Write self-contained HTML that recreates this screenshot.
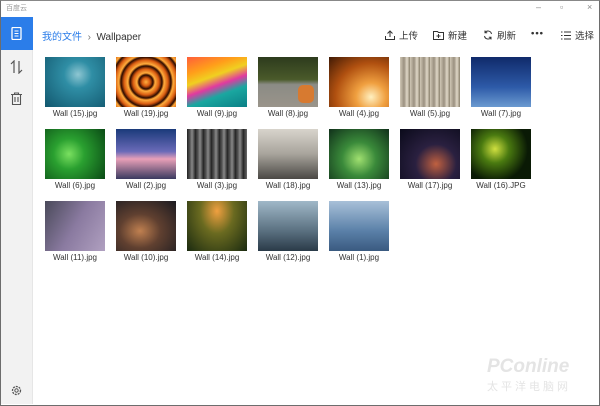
<!DOCTYPE html>
<html><head><meta charset="utf-8"><style>
*{margin:0;padding:0;box-sizing:border-box}
body{width:600px;height:406px;overflow:hidden;background:#fff;font-family:"Liberation Sans","Noto Sans CJK SC",sans-serif;position:relative}
.win{position:absolute;left:0;top:0;width:600px;height:406px;border:1px solid #6d6d6d;border-top:1px solid #888}
.title{position:absolute;left:6px;top:3px;font-size:7px;color:#999}
.side{position:absolute;left:1px;top:17px;width:32px;height:387px;background:#f2f2f2;border-right:1px solid #e6e6e6}
.act{position:absolute;left:1px;top:17px;width:32px;height:33px;background:#2b7de9}
.crumb{position:absolute;left:42px;top:28px;font-size:10px;color:#333}
.crumb b{font-weight:normal;color:#2b7de9}
.tb{position:absolute;top:28px;font-size:9.5px;color:#333;display:flex;align-items:center;gap:4px}
.th{position:absolute;width:60px;height:50px}
.lb{position:absolute;width:72px;text-align:center;font-size:8px;color:#333}
.wm{position:absolute;left:487px;top:356px;color:#e4e4e4;font-size:19px;font-style:italic;font-weight:bold}
.wm2{position:absolute;left:487px;top:378px;color:#e4e4e4;font-size:11px;letter-spacing:3px}
.ctl{position:absolute;top:2px;font-size:9px;color:#888}
</style></head><body>
<div class="win"></div>
<div class="title">百度云</div>
<div class="ctl" style="left:536px">–</div>
<div class="ctl" style="left:560px">▫</div>
<div class="ctl" style="left:587px">×</div>
<div class="side"></div>
<div class="act"></div>
<svg style="position:absolute;left:11px;top:27px" width="12" height="13" viewBox="0 0 12 13"><rect x="1" y="0.5" width="9" height="12" rx="1" fill="none" stroke="#fff" stroke-width="1.3"/><path d="M3.5 4h4M3.5 6.5h4M3.5 9h4" stroke="#fff" stroke-width="1.1"/></svg>
<svg style="position:absolute;left:10px;top:60px" width="13" height="14" viewBox="0 0 13 14"><path d="M4 13V1L1 4M9 1v12l3-3" fill="none" stroke="#555" stroke-width="1.2"/></svg>
<svg style="position:absolute;left:11px;top:92px" width="11" height="13" viewBox="0 0 11 13"><path d="M0 2.5h11M3.5 2.5V1h4v1.5M1.5 2.5v10h8v-10M4 5v5M7 5v5" fill="none" stroke="#555" stroke-width="1.1"/></svg>
<svg style="position:absolute;left:11px;top:385px" width="11" height="11" viewBox="0 0 11 11"><circle cx="5.5" cy="5.5" r="4" fill="none" stroke="#555" stroke-width="1.3" stroke-dasharray="2 1"/><circle cx="5.5" cy="5.5" r="1.7" fill="none" stroke="#555"/></svg>
<div class="crumb"><b>我的文件</b> &nbsp;<span style="color:#777">›</span>&nbsp; Wallpaper</div>
<div class="tb" style="left:385px"><svg width="10" height="10" viewBox="0 0 10 10"><path d="M5 7V1M2.5 3.5L5 1l2.5 2.5M0.5 6v3.5h9V6" fill="none" stroke="#333" stroke-width="1"/></svg>上传</div>
<div class="tb" style="left:433px"><svg width="11" height="10" viewBox="0 0 11 10"><path d="M.5 1.5h4l1 1h5v7H.5z M5.5 4v4M3.5 6h4" fill="none" stroke="#333" stroke-width="1"/></svg>新建</div>
<div class="tb" style="left:483px"><svg width="10" height="10" viewBox="0 0 10 10"><path d="M8.5 4A3.6 3.6 0 0 0 2 2.5M1.5 6A3.6 3.6 0 0 0 8 7.5M2 .5v2.2h2.2M8 9.5V7.3H5.8" fill="none" stroke="#333" stroke-width="1"/></svg>刷新</div>
<div class="tb" style="left:531px;font-weight:bold;letter-spacing:1px">•••</div>
<div class="tb" style="left:561px"><svg width="10" height="9" viewBox="0 0 10 9"><path d="M0 1h1.5M3 1h7M0 4.5h1.5M3 4.5h7M0 8h1.5M3 8h7" stroke="#333" stroke-width="1"/></svg>选择</div>

<div class="th" style="left:45px;top:57px;background:radial-gradient(ellipse at 55% 35%,#8ec6d2 0,#2f8ea5 30%,#12576e 100%)"></div>
<div class="th" style="left:116px;top:57px;background:repeating-radial-gradient(circle at 50% 50%,#ffb040 0,#d85a10 4px,#2a0a00 7px,#ffa030 9px);"></div>
<div class="th" style="left:187px;top:57px;background:linear-gradient(160deg,#ff5e3a 0,#ff9f1a 25%,#f0d020 40%,#e03aa0 55%,#1aa7a0 70%,#0b7f86 100%)"></div>
<div class="th" style="left:258px;top:57px;background:linear-gradient(180deg,#2d3b1d 0,#4a5a2a 45%,#8b8b85 55%,#9a948a 100%)"><div style="position:absolute;left:40px;top:28px;width:16px;height:18px;background:#d77a30;border-radius:5px"></div></div>
<div class="th" style="left:329px;top:57px;background:radial-gradient(ellipse at 70% 80%,#fff0c0 0,#f0a040 25%,#b05010 60%,#401a05 100%)"></div>
<div class="th" style="left:400px;top:57px;background:repeating-linear-gradient(90deg,#cfc6b4 0,#9a9080 4px,#e0d8c8 7px,#8a806c 10px)"></div>
<div class="th" style="left:471px;top:57px;background:linear-gradient(180deg,#0f2a6a 0,#2d5aa8 60%,#6b9ad0 100%)"></div>

<div class="th" style="left:45px;top:129px;background:radial-gradient(circle at 40% 50%,#7ae060 0,#2aa030 35%,#0a4a15 100%)"></div>
<div class="th" style="left:116px;top:129px;background:linear-gradient(180deg,#1a3a7a 0,#6a6ab8 45%,#e8a0b8 60%,#3a3a60 100%)"></div>
<div class="th" style="left:187px;top:129px;background:repeating-linear-gradient(90deg,#222 0,#555 3px,#888 5px,#333 8px)"></div>
<div class="th" style="left:258px;top:129px;background:linear-gradient(180deg,#d8d4cc 0,#a8a49c 50%,#4a4844 100%)"></div>
<div class="th" style="left:329px;top:129px;background:radial-gradient(ellipse at 50% 60%,#a0e070 0,#3a8a3a 40%,#10301a 100%)"></div>
<div class="th" style="left:400px;top:129px;background:radial-gradient(ellipse at 60% 70%,#c06040 0,#2a2040 40%,#0a0a1a 100%)"></div>
<div class="th" style="left:471px;top:129px;background:radial-gradient(circle at 40% 40%,#d0e040 0,#4a7a10 30%,#0a1a05 70%)"></div>

<div class="th" style="left:45px;top:201px;background:linear-gradient(120deg,#4a4a5a 0,#8a7aa0 50%,#b0a0c0 100%)"></div>
<div class="th" style="left:116px;top:201px;background:radial-gradient(ellipse at 40% 60%,#c08050 0,#604030 40%,#1a1a20 100%)"></div>
<div class="th" style="left:187px;top:201px;background:radial-gradient(ellipse at 50% 20%,#f0a040 0,#6a6a20 40%,#1a2a10 100%)"></div>
<div class="th" style="left:258px;top:201px;background:linear-gradient(180deg,#a0b8c8 0,#5a7080 60%,#2a3a48 100%)"></div>
<div class="th" style="left:329px;top:201px;background:linear-gradient(180deg,#a8c0d8 0,#5a80a8 60%,#3a5a80 100%)"></div>

<div class="lb" style="left:39px;top:109px">Wall (15).jpg</div>
<div class="lb" style="left:110px;top:109px">Wall (19).jpg</div>
<div class="lb" style="left:181px;top:109px">Wall (9).jpg</div>
<div class="lb" style="left:252px;top:109px">Wall (8).jpg</div>
<div class="lb" style="left:323px;top:109px">Wall (4).jpg</div>
<div class="lb" style="left:394px;top:109px">Wall (5).jpg</div>
<div class="lb" style="left:465px;top:109px">Wall (7).jpg</div>
<div class="lb" style="left:39px;top:181px">Wall (6).jpg</div>
<div class="lb" style="left:110px;top:181px">Wall (2).jpg</div>
<div class="lb" style="left:181px;top:181px">Wall (3).jpg</div>
<div class="lb" style="left:252px;top:181px">Wall (18).jpg</div>
<div class="lb" style="left:323px;top:181px">Wall (13).jpg</div>
<div class="lb" style="left:394px;top:181px">Wall (17).jpg</div>
<div class="lb" style="left:465px;top:181px">Wall (16).JPG</div>
<div class="lb" style="left:39px;top:253px">Wall (11).jpg</div>
<div class="lb" style="left:110px;top:253px">Wall (10).jpg</div>
<div class="lb" style="left:181px;top:253px">Wall (14).jpg</div>
<div class="lb" style="left:252px;top:253px">Wall (12).jpg</div>
<div class="lb" style="left:323px;top:253px">Wall (1).jpg</div>
<div class="wm">PConline</div>
<div class="wm2">太平洋电脑网</div>
</body></html>
